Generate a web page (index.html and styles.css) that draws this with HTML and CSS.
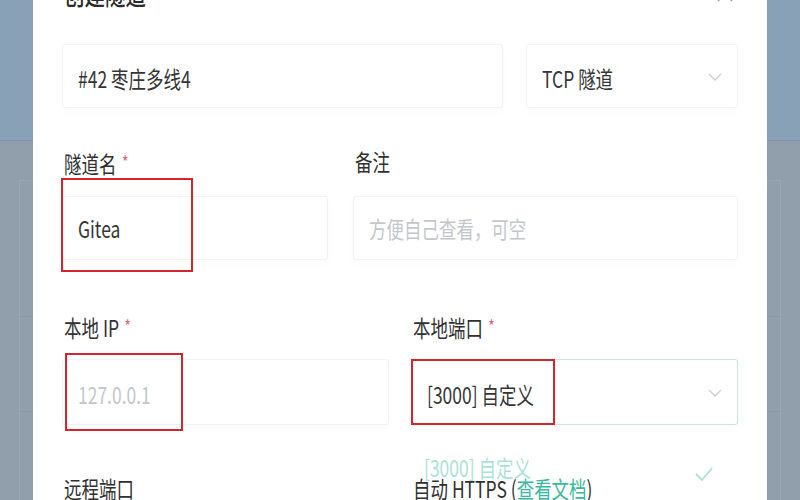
FILE: index.html
```html
<!DOCTYPE html>
<html lang="zh-CN">
<head>
<meta charset="utf-8">
<title>创建隧道</title>
<link rel="stylesheet" href="styles.css">
</head>
<body>
<div class="backdrop">
  <div class="bd-header"></div>
  <div class="bd-body">
    <div class="bd-card">
      <div class="bd-row bd-row-a"></div>
      <div class="bd-row bd-row-b"></div>
      <div class="bd-row"></div>
    </div>
  </div>
</div>

<div class="modal">
  <div class="modal-head">
    <span class="title"><span class="t">创建隧道</span></span>
    <svg class="close" width="20" height="20" viewBox="0 0 20 20"><path d="M3 3 L17 17 M17 3 L3 17" stroke="#9aa0a6" stroke-width="1.6" fill="none"/></svg>
  </div>

  <div class="row row-1">
    <div class="box box-node"><span class="t val">#42 枣庄多线4</span></div>
    <div class="box box-type"><span class="t val">TCP 隧道</span>
      <svg class="chev" width="14" height="10" viewBox="0 0 14 10"><path d="M1 2 L7 8 L13 2" stroke="#c9ced3" stroke-width="1.3" fill="none"/></svg>
    </div>
  </div>

  <div class="row row-2">
    <div class="field f-name">
      <div class="label"><span class="t">隧道名 <span class="star">*</span></span></div>
      <div class="box"><span class="t val">Gitea</span></div>
      <div class="mark mark-name"></div>
    </div>
    <div class="field f-remark">
      <div class="label"><span class="t">备注</span></div>
      <div class="box"><span class="t ph">方便自己查看，可空</span></div>
    </div>
  </div>

  <div class="row row-3">
    <div class="field">
      <div class="label"><span class="t">本地 IP <span class="star">*</span></span></div>
      <div class="box box-tall"><span class="t ph">127.0.0.1</span></div>
      <div class="mark mark-ip"></div>
    </div>
    <div class="field">
      <div class="label"><span class="t">本地端口 <span class="star">*</span></span></div>
      <div class="box box-tall box-focus"><span class="t val">[3000] 自定义</span>
        <svg class="chev" width="14" height="10" viewBox="0 0 14 10"><path d="M1 2 L7 8 L13 2" stroke="#c9ced3" stroke-width="1.3" fill="none"/></svg>
      </div>
      <div class="mark mark-port"></div>
      <div class="dropdown">
        <div class="option"><span class="t">[3000] 自定义</span>
          <svg width="20" height="16" viewBox="0 0 20 16"><path d="M2 8 L8 14 L18 2" stroke="#37b99c" stroke-width="1.8" fill="none"/></svg>
        </div>
      </div>
    </div>
  </div>

  <div class="row row-4">
    <div class="field">
      <div class="label"><span class="t">远程端口</span></div>
    </div>
    <div class="field">
      <div class="label"><span class="t">自动 HTTPS (<span class="link">查看文档</span>)</span></div>
    </div>
  </div>
</div>
</body>
</html>
```

FILE: styles.css
```css
html, body {
  margin: 0;
  padding: 0;
}
body {
  width: 800px;
  height: 500px;
  overflow: hidden;
  position: relative;
  font-family: "Noto Sans CJK SC", "Noto Sans", sans-serif;
  color: #333;
  background: #909fab;
}

.backdrop {
  display: flex;
  flex-direction: column;
  height: 500px;
}
.bd-header {
  height: 140px;
  background: #89a1b7;
  border-bottom: 1px solid #7f93a5;
}
.bd-body {
  flex: 1;
  background: #909fab;
  padding: 39px 19px 0;
}
.bd-card {
  border: 1px solid #98a7b2;
  border-bottom: none;
  height: 100%;
  display: flex;
  flex-direction: column;
}
.bd-row-a { height: 135px; border-bottom: 1px solid #8998a4; }
.bd-row-b { height: 94px; border-bottom: 1px solid #8998a4; }

.modal {
  position: absolute;
  left: 33px;
  top: -21px;
  width: 734px;
  bottom: 0;
  background: #fff;
  padding: 0 29px;
  box-sizing: border-box;
}

.t {
  display: inline-block;
  transform: scaleX(0.76);
  transform-origin: 0 50%;
  white-space: nowrap;
}

.modal-head {
  height: 30px;
  display: flex;
  justify-content: space-between;
  align-items: center;
}
.title {
  font-size: 27px;
  line-height: 30px;
  font-weight: 500;
  color: #2b2b2b;
  padding-left: 2px;
}
.close {
  margin-right: 3px;
}

.row {
  display: flex;
}
.row-1 {
  margin-top: 35px;
  gap: 23px;
}
.row-2 {
  margin-top: 38px;
  gap: 25px;
}
.row-3 {
  margin-top: 50px;
  gap: 22px;
}
.row-4 {
  margin-top: 48px;
  gap: 22px;
}

.box {
  height: 64px;
  box-sizing: border-box;
  border: 1px solid #f1f2f4;
  border-radius: 3px;
  box-shadow: 0 4px 8px rgba(0, 0, 0, 0.02);
  display: flex;
  align-items: center;
  padding: 3px 0 0 15px;
  font-size: 23px;
  position: relative;
  background: #fff;
}
.row-2 .box { padding-top: 0; }
.box-tall {
  height: 66px;
}
.box-focus {
  border-color: #c8e8df;
}
.box-node { width: 441px; }
.box-type { flex: 1; }
.chev {
  position: absolute;
  right: 15px;
  top: 50%;
  margin-top: -4px;
}
.val { color: #353535; }
.ph { color: #c3c7cc; }

.field {
  position: relative;
  flex: 1;
}
.f-name { flex: 0 0 266px; }
.label {
  height: 30px;
  line-height: 30px;
  font-size: 23px;
  color: #303030;
  margin-bottom: 20px;
  padding-left: 2px;
}
.row-3 .label { margin-bottom: 19px; }
.star {
  color: #e0607e;
  font-size: 18px;
  vertical-align: 4px;
  margin-left: 2px;
}
.link { color: #37b99c; }

.mark {
  position: absolute;
  border: 2px solid #d3242f;
  box-sizing: border-box;
}
.mark-name { left: -1px; top: 32px; width: 132px; height: 94px; }
.mark-ip { left: 3px; top: 43px; width: 118px; height: 78px; }
.mark-port { left: 0; top: 49px; width: 144px; height: 66px; }

.dropdown {
  position: absolute;
  left: 0;
  right: 0;
  top: 125px;
  opacity: 0.42;
  background: rgba(255, 255, 255, 0.6);
}
.option {
  height: 64px;
  display: flex;
  align-items: center;
  justify-content: space-between;
  padding: 0 24px 0 13px;
  font-size: 23px;
  color: #37b99c;
}
.option svg { margin-top: 14px; }
```
